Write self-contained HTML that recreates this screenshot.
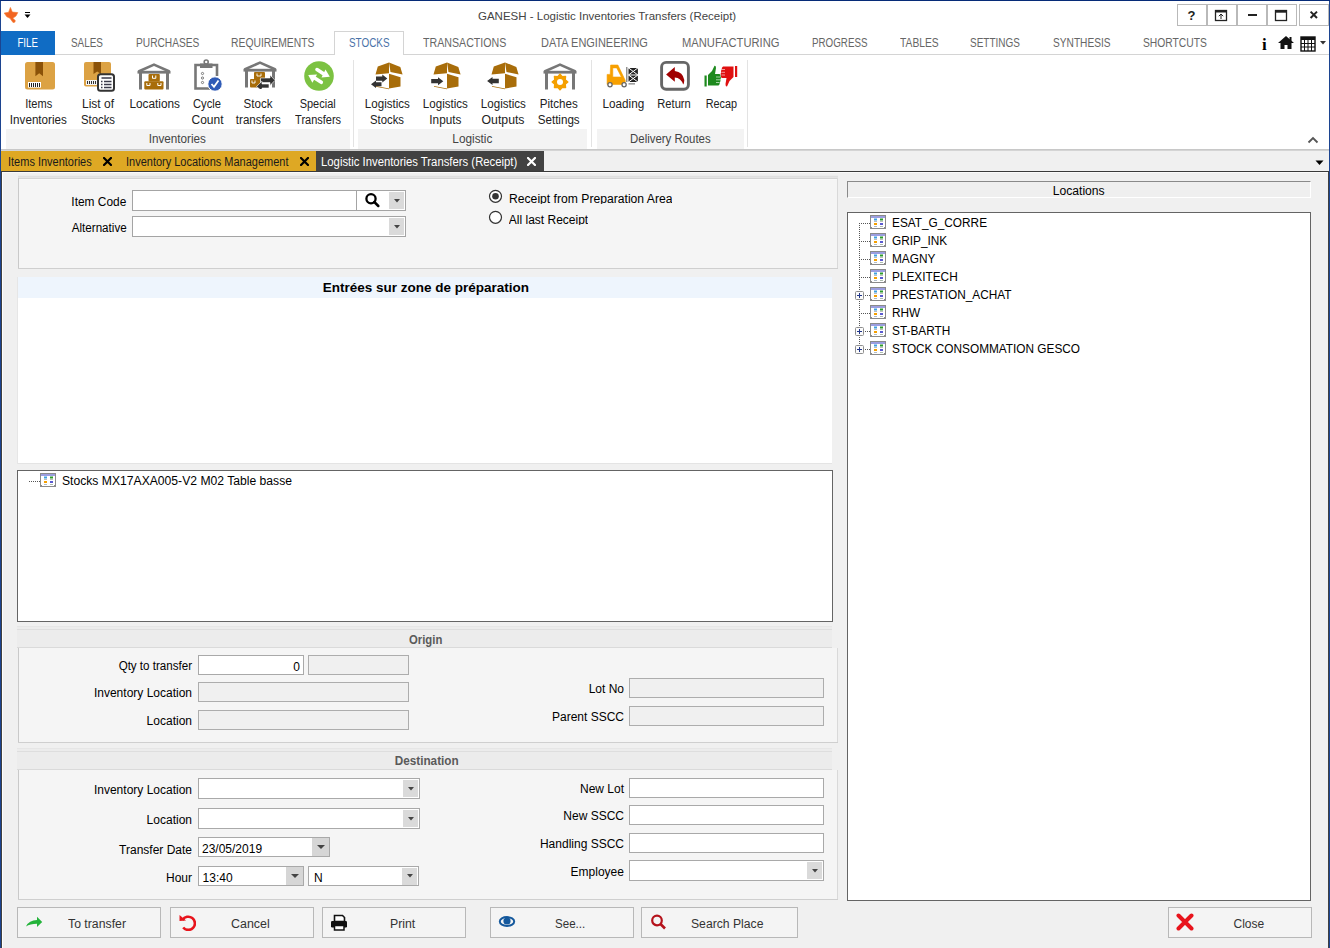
<!DOCTYPE html>
<html><head><meta charset="utf-8"><style>
html,body{margin:0;padding:0;}
body{width:1330px;height:948px;overflow:hidden;position:relative;background:#f0f0f0;font-family:'Liberation Sans', sans-serif;}
.a{position:absolute;}
.t{white-space:pre;}
</style></head><body>
<div class="a" style="left:0px;top:0px;width:1330px;height:150px;background:#ffffff;"></div>
<div class="a t" style="left:478.00px;top:11.07px;font-size:11.5px;line-height:11.5px;color:#444444;font-weight:normal;">GANESH - Logistic Inventories Transfers (Receipt)</div>
<div class="a" style="left:1177px;top:4px;width:30px;height:22px;background:#ffffff;border:1px solid #b9b9b9;box-sizing:border-box;"></div>
<div class="a" style="left:1207px;top:4px;width:30px;height:22px;background:#ffffff;border:1px solid #b9b9b9;box-sizing:border-box;"></div>
<div class="a" style="left:1237px;top:4px;width:30px;height:22px;background:#ffffff;border:1px solid #b9b9b9;box-sizing:border-box;"></div>
<div class="a" style="left:1267px;top:4px;width:30px;height:22px;background:#ffffff;border:1px solid #b9b9b9;box-sizing:border-box;"></div>
<div class="a" style="left:1299px;top:4px;width:30px;height:22px;background:#ffffff;border:1px solid #b9b9b9;box-sizing:border-box;"></div>
<div class="a" style="left:1px;top:31px;width:54px;height:24px;background:#106cc4;"></div>
<div class="a t" style="left:15.33px;top:36.84px;font-size:12px;line-height:12px;color:#ffffff;font-weight:normal;transform:scaleX(0.8089);transform-origin:center;">FILE</div>
<div class="a" style="left:55px;top:54px;width:1274px;height:1px;background:#d4d4d4;"></div>
<div class="a" style="left:334px;top:31px;width:70px;height:24px;background:#ffffff;border:1px solid #d4d4d4;border-bottom:none;box-sizing:border-box;"></div>
<div class="a t" style="left:71.00px;top:36.62px;font-size:12.5px;line-height:12.5px;color:#666666;font-weight:normal;transform:scaleX(0.7938);transform-origin:left;">SALES</div>
<div class="a t" style="left:135.60px;top:36.62px;font-size:12.5px;line-height:12.5px;color:#666666;font-weight:normal;transform:scaleX(0.8149);transform-origin:left;">PURCHASES</div>
<div class="a t" style="left:231.30px;top:36.62px;font-size:12.5px;line-height:12.5px;color:#666666;font-weight:normal;transform:scaleX(0.8282);transform-origin:left;">REQUIREMENTS</div>
<div class="a t" style="left:349.30px;top:36.62px;font-size:12.5px;line-height:12.5px;color:#4a72a8;font-weight:normal;transform:scaleX(0.7934);transform-origin:left;">STOCKS</div>
<div class="a t" style="left:422.60px;top:36.62px;font-size:12.5px;line-height:12.5px;color:#666666;font-weight:normal;transform:scaleX(0.8516);transform-origin:left;">TRANSACTIONS</div>
<div class="a t" style="left:541.10px;top:36.62px;font-size:12.5px;line-height:12.5px;color:#666666;font-weight:normal;transform:scaleX(0.8778);transform-origin:left;">DATA ENGINEERING</div>
<div class="a t" style="left:681.60px;top:36.62px;font-size:12.5px;line-height:12.5px;color:#666666;font-weight:normal;transform:scaleX(0.8933);transform-origin:left;">MANUFACTURING</div>
<div class="a t" style="left:812.40px;top:36.62px;font-size:12.5px;line-height:12.5px;color:#666666;font-weight:normal;transform:scaleX(0.7832);transform-origin:left;">PROGRESS</div>
<div class="a t" style="left:899.50px;top:36.62px;font-size:12.5px;line-height:12.5px;color:#666666;font-weight:normal;transform:scaleX(0.8231);transform-origin:left;">TABLES</div>
<div class="a t" style="left:970.10px;top:36.62px;font-size:12.5px;line-height:12.5px;color:#666666;font-weight:normal;transform:scaleX(0.7982);transform-origin:left;">SETTINGS</div>
<div class="a t" style="left:1053.30px;top:36.62px;font-size:12.5px;line-height:12.5px;color:#666666;font-weight:normal;transform:scaleX(0.8129);transform-origin:left;">SYNTHESIS</div>
<div class="a t" style="left:1143.10px;top:36.62px;font-size:12.5px;line-height:12.5px;color:#666666;font-weight:normal;transform:scaleX(0.8239);transform-origin:left;">SHORTCUTS</div>
<div class="a" style="left:6px;top:129px;width:344px;height:20px;background:#f3f3f3;"></div>
<div class="a" style="left:358px;top:129px;width:229px;height:20px;background:#f3f3f3;"></div>
<div class="a" style="left:597px;top:129px;width:147px;height:20px;background:#f3f3f3;"></div>
<div class="a" style="left:353px;top:60px;width:1px;height:87px;background:#e3e3e3;"></div>
<div class="a" style="left:591px;top:60px;width:1px;height:87px;background:#e3e3e3;"></div>
<div class="a" style="left:747px;top:60px;width:1px;height:87px;background:#e3e3e3;"></div>
<div class="a" style="left:0px;top:149px;width:1330px;height:1px;background:#c8c8c8;"></div>
<div class="a t" style="left:23.83px;top:98.44px;font-size:12px;line-height:12px;color:#222222;font-weight:normal;transform:scaleX(0.9201);transform-origin:center;">Items</div>
<div class="a t" style="left:9.15px;top:114.44px;font-size:12px;line-height:12px;color:#222222;font-weight:normal;transform:scaleX(0.9710);transform-origin:center;">Inventories</div>
<div class="a t" style="left:81.99px;top:98.44px;font-size:12px;line-height:12px;color:#222222;font-weight:normal;">List of</div>
<div class="a t" style="left:79.99px;top:114.44px;font-size:12px;line-height:12px;color:#222222;font-weight:normal;transform:scaleX(0.9440);transform-origin:center;">Stocks</div>
<div class="a t" style="left:129.01px;top:98.44px;font-size:12px;line-height:12px;color:#222222;font-weight:normal;transform:scaleX(0.9849);transform-origin:center;">Locations</div>
<div class="a t" style="left:192.49px;top:98.44px;font-size:12px;line-height:12px;color:#222222;font-weight:normal;transform:scaleX(0.9328);transform-origin:center;">Cycle</div>
<div class="a t" style="left:191.48px;top:114.44px;font-size:12px;line-height:12px;color:#222222;font-weight:normal;">Count</div>
<div class="a t" style="left:243.49px;top:98.44px;font-size:12px;line-height:12px;color:#222222;font-weight:normal;transform:scaleX(0.9662);transform-origin:center;">Stock</div>
<div class="a t" style="left:235.16px;top:114.44px;font-size:12px;line-height:12px;color:#222222;font-weight:normal;transform:scaleX(0.9639);transform-origin:center;">transfers</div>
<div class="a t" style="left:298.32px;top:98.44px;font-size:12px;line-height:12px;color:#222222;font-weight:normal;transform:scaleX(0.9146);transform-origin:center;">Special</div>
<div class="a t" style="left:292.88px;top:114.44px;font-size:12px;line-height:12px;color:#222222;font-weight:normal;transform:scaleX(0.9157);transform-origin:center;">Transfers</div>
<div class="a t" style="left:363.86px;top:98.44px;font-size:12px;line-height:12px;color:#222222;font-weight:normal;transform:scaleX(0.9639);transform-origin:center;">Logistics</div>
<div class="a t" style="left:369.19px;top:114.44px;font-size:12px;line-height:12px;color:#222222;font-weight:normal;transform:scaleX(0.9440);transform-origin:center;">Stocks</div>
<div class="a t" style="left:421.96px;top:98.44px;font-size:12px;line-height:12px;color:#222222;font-weight:normal;transform:scaleX(0.9639);transform-origin:center;">Logistics</div>
<div class="a t" style="left:428.95px;top:114.44px;font-size:12px;line-height:12px;color:#222222;font-weight:normal;transform:scaleX(0.9785);transform-origin:center;">Inputs</div>
<div class="a t" style="left:479.96px;top:98.44px;font-size:12px;line-height:12px;color:#222222;font-weight:normal;transform:scaleX(0.9639);transform-origin:center;">Logistics</div>
<div class="a t" style="left:482.28px;top:114.44px;font-size:12px;line-height:12px;color:#222222;font-weight:normal;transform:scaleX(1.0230);transform-origin:center;">Outputs</div>
<div class="a t" style="left:539.32px;top:98.44px;font-size:12px;line-height:12px;color:#222222;font-weight:normal;transform:scaleX(0.9655);transform-origin:center;">Pitches</div>
<div class="a t" style="left:537.32px;top:114.44px;font-size:12px;line-height:12px;color:#222222;font-weight:normal;transform:scaleX(0.9686);transform-origin:center;">Settings</div>
<div class="a t" style="left:602.24px;top:98.44px;font-size:12px;line-height:12px;color:#222222;font-weight:normal;transform:scaleX(0.9762);transform-origin:center;">Loading</div>
<div class="a t" style="left:656.48px;top:98.44px;font-size:12px;line-height:12px;color:#222222;font-weight:normal;transform:scaleX(0.9297);transform-origin:center;">Return</div>
<div class="a t" style="left:703.96px;top:98.44px;font-size:12px;line-height:12px;color:#222222;font-weight:normal;transform:scaleX(0.9023);transform-origin:center;">Recap</div>
<div class="a t" style="left:147.75px;top:133.14px;font-size:12px;line-height:12px;color:#444444;font-weight:normal;transform:scaleX(0.9744);transform-origin:center;">Inventories</div>
<div class="a t" style="left:451.96px;top:133.14px;font-size:12px;line-height:12px;color:#444444;font-weight:normal;transform:scaleX(0.9831);transform-origin:center;">Logistic</div>
<div class="a t" style="left:628.25px;top:133.14px;font-size:12px;line-height:12px;color:#444444;font-weight:normal;transform:scaleX(0.9504);transform-origin:center;">Delivery Routes</div>
<div class="a" style="left:0px;top:150px;width:1330px;height:21px;background:#f0f0f0;"></div>
<div class="a" style="left:0px;top:150px;width:1330px;height:1px;background:#d4d4d4;"></div>
<div class="a" style="left:1px;top:151px;width:315px;height:20px;background:#dea824;"></div>
<div class="a" style="left:316px;top:151px;width:228px;height:20px;background:#424242;"></div>
<div class="a" style="left:0px;top:171px;width:1330px;height:1px;background:#3a3a3a;"></div>
<div class="a t" style="left:8.30px;top:156.24px;font-size:12px;line-height:12px;color:#1a1a1a;font-weight:normal;transform:scaleX(0.9160);transform-origin:left;">Items Inventories</div>
<div class="a t" style="left:126.10px;top:156.24px;font-size:12px;line-height:12px;color:#1a1a1a;font-weight:normal;transform:scaleX(0.9157);transform-origin:left;">Inventory Locations Management</div>
<div class="a t" style="left:321.20px;top:156.24px;font-size:12px;line-height:12px;color:#ffffff;font-weight:normal;transform:scaleX(0.9433);transform-origin:left;">Logistic Inventories Transfers (Receipt)</div>
<div class="a" style="left:2px;top:172px;width:1326px;height:1px;background:#fbfbfb;"></div>
<div class="a" style="left:2px;top:172px;width:1px;height:777px;background:#ffffff;"></div>
<div class="a" style="left:1px;top:172px;width:1px;height:777px;background:#404040;"></div>
<div class="a" style="left:1328px;top:172px;width:1px;height:777px;background:#404040;"></div>
<div class="a" style="left:0px;top:0px;width:1px;height:949px;background:#1c4490;"></div>
<div class="a" style="left:1329px;top:0px;width:1px;height:949px;background:#1c4490;"></div>
<div class="a" style="left:0px;top:0px;width:1330px;height:1px;background:#062b78;"></div>
<div class="a" style="left:18px;top:176px;width:820px;height:93px;background:#f5f5f5;"></div>
<div class="a" style="left:18px;top:175px;width:820px;height:1px;background:#ececec;"></div>
<div class="a" style="left:18px;top:176px;width:820px;height:1px;background:#e0e0e0;"></div>
<div class="a" style="left:18px;top:177px;width:820px;height:1px;background:#e4e4e4;"></div>
<div class="a" style="left:18px;top:178px;width:820px;height:1px;background:#d4d4d4;"></div>
<div class="a" style="left:19px;top:179px;width:818px;height:1px;background:#f9f9f9;"></div>
<div class="a" style="left:18px;top:178px;width:1px;height:91px;background:#c9c9c9;"></div>
<div class="a" style="left:837px;top:178px;width:1px;height:91px;background:#d9d9d9;"></div>
<div class="a" style="left:18px;top:268px;width:820px;height:1px;background:#cfcfcf;"></div>
<div class="a t" style="left:71.14px;top:196.24px;font-size:12px;line-height:12px;color:#000;font-weight:normal;transform:scaleX(0.9935);transform-origin:right;">Item Code</div>
<div class="a t" style="left:69.80px;top:222.24px;font-size:12px;line-height:12px;color:#000;font-weight:normal;transform:scaleX(0.9700);transform-origin:right;">Alternative</div>
<div class="a" style="left:132px;top:190px;width:274px;height:21px;background:#ffffff;border:1px solid #a4a4a4;box-sizing:border-box;"></div>
<div class="a" style="left:356px;top:191px;width:1px;height:19px;background:#a4a4a4;"></div>
<div class="a" style="left:389px;top:192px;width:15px;height:17px;background:#dadada;"></div>
<div class="a" style="left:132px;top:216px;width:274px;height:21px;background:#ffffff;border:1px solid #a4a4a4;box-sizing:border-box;"></div>
<div class="a" style="left:389px;top:218px;width:15px;height:17px;background:#dadada;"></div>
<div class="a t" style="left:508.80px;top:193.14px;font-size:12px;line-height:12px;color:#000;font-weight:normal;transform:scaleX(1.0129);transform-origin:left;height:11px;overflow:hidden;">Receipt from Preparation Area</div>
<div class="a t" style="left:508.80px;top:214.34px;font-size:12px;line-height:12px;color:#000;font-weight:normal;height:11px;overflow:hidden;">All last Receipt</div>
<div class="a" style="left:17px;top:277px;width:815px;height:21px;background:#eef5fd;"></div>
<div class="a" style="left:17px;top:298px;width:815px;height:166px;background:#ffffff;"></div>
<div class="a" style="left:17px;top:463px;width:815px;height:1px;background:#e4e4e4;"></div>
<div class="a" style="left:17px;top:277px;width:1px;height:187px;background:#e6e6e6;"></div>
<div class="a t" style="left:322.74px;top:281.27px;font-size:13.5px;line-height:13.5px;color:#000;font-weight:bold;">Entrées sur zone de préparation</div>
<div class="a" style="left:17px;top:470px;width:816px;height:152px;background:#ffffff;border:1px solid #646464;box-sizing:border-box;"></div>
<div class="a t" style="left:61.70px;top:475.24px;font-size:12px;line-height:12px;color:#000;font-weight:normal;transform:scaleX(1.0121);transform-origin:left;">Stocks MX17AXA005-V2 M02 Table basse</div>
<div class="a" style="left:18px;top:648px;width:820px;height:95px;background:#f5f5f5;"></div>
<div class="a" style="left:17px;top:626px;width:815px;height:22px;background:#ececec;"></div>
<div class="a" style="left:17px;top:626px;width:815px;height:1px;background:#e6e6e6;"></div>
<div class="a" style="left:17px;top:629px;width:815px;height:1px;background:#dedede;"></div>
<div class="a" style="left:17px;top:647px;width:815px;height:1px;background:#dadada;"></div>
<div class="a" style="left:18px;top:648px;width:1px;height:95px;background:#c9c9c9;"></div>
<div class="a" style="left:837px;top:648px;width:1px;height:95px;background:#d9d9d9;"></div>
<div class="a" style="left:18px;top:742px;width:820px;height:1px;background:#cfcfcf;"></div>
<div class="a t" style="left:408.33px;top:633.54px;font-size:12px;line-height:12px;color:#5a5a5a;font-weight:bold;transform:scaleX(0.9422);transform-origin:center;">Origin</div>
<div class="a t" style="left:115.97px;top:659.84px;font-size:12px;line-height:12px;color:#000;font-weight:normal;transform:scaleX(0.9654);transform-origin:right;">Qty to transfer</div>
<div class="a t" style="left:93.94px;top:686.84px;font-size:12px;line-height:12px;color:#000;font-weight:normal;">Inventory Location</div>
<div class="a t" style="left:146.62px;top:714.84px;font-size:12px;line-height:12px;color:#000;font-weight:normal;">Location</div>
<div class="a" style="left:198px;top:655px;width:106px;height:20px;background:#ffffff;border:1px solid #a9a9a9;box-sizing:border-box;"></div>
<div class="a t" style="left:293.31px;top:660.64px;font-size:12px;line-height:12px;color:#000;font-weight:normal;">0</div>
<div class="a" style="left:308px;top:655px;width:101px;height:20px;background:#f0f0f0;border:1px solid #adadad;box-sizing:border-box;"></div>
<div class="a" style="left:198px;top:682px;width:211px;height:20px;background:#f0f0f0;border:1px solid #adadad;box-sizing:border-box;"></div>
<div class="a" style="left:198px;top:710px;width:211px;height:20px;background:#f0f0f0;border:1px solid #adadad;box-sizing:border-box;"></div>
<div class="a t" style="left:588.64px;top:682.64px;font-size:12px;line-height:12px;color:#000;font-weight:normal;">Lot No</div>
<div class="a t" style="left:551.97px;top:710.64px;font-size:12px;line-height:12px;color:#000;font-weight:normal;">Parent SSCC</div>
<div class="a" style="left:629px;top:678px;width:195px;height:20px;background:#f0f0f0;border:1px solid #adadad;box-sizing:border-box;"></div>
<div class="a" style="left:629px;top:706px;width:195px;height:20px;background:#f0f0f0;border:1px solid #adadad;box-sizing:border-box;"></div>
<div class="a" style="left:18px;top:770px;width:820px;height:130px;background:#f5f5f5;"></div>
<div class="a" style="left:17px;top:748px;width:815px;height:22px;background:#ececec;"></div>
<div class="a" style="left:17px;top:748px;width:815px;height:1px;background:#e6e6e6;"></div>
<div class="a" style="left:17px;top:751px;width:815px;height:1px;background:#dedede;"></div>
<div class="a" style="left:17px;top:769px;width:815px;height:1px;background:#dadada;"></div>
<div class="a" style="left:18px;top:770px;width:1px;height:130px;background:#c9c9c9;"></div>
<div class="a" style="left:837px;top:770px;width:1px;height:130px;background:#d9d9d9;"></div>
<div class="a" style="left:18px;top:899px;width:820px;height:1px;background:#cfcfcf;"></div>
<div class="a t" style="left:394.03px;top:755.34px;font-size:12px;line-height:12px;color:#5a5a5a;font-weight:bold;transform:scaleX(0.9794);transform-origin:center;">Destination</div>
<div class="a t" style="left:93.94px;top:783.84px;font-size:12px;line-height:12px;color:#000;font-weight:normal;">Inventory Location</div>
<div class="a t" style="left:146.62px;top:813.84px;font-size:12px;line-height:12px;color:#000;font-weight:normal;">Location</div>
<div class="a t" style="left:119.08px;top:843.64px;font-size:12px;line-height:12px;color:#000;font-weight:normal;">Transfer Date</div>
<div class="a t" style="left:165.98px;top:872.14px;font-size:12px;line-height:12px;color:#000;font-weight:normal;">Hour</div>
<div class="a" style="left:198px;top:778px;width:222px;height:21px;background:#ffffff;border:1px solid #a9a9a9;box-sizing:border-box;"></div>
<div class="a" style="left:403px;top:780px;width:15px;height:17px;background:#dadada;"></div>
<div class="a" style="left:198px;top:808px;width:222px;height:21px;background:#ffffff;border:1px solid #a9a9a9;box-sizing:border-box;"></div>
<div class="a" style="left:403px;top:810px;width:15px;height:17px;background:#dadada;"></div>
<div class="a" style="left:198px;top:837px;width:132px;height:20px;background:#ffffff;border:1px solid #a9a9a9;box-sizing:border-box;"></div>
<div class="a" style="left:312px;top:838px;width:17px;height:18px;background:#d6d6d6;"></div>
<div class="a t" style="left:202.00px;top:843.34px;font-size:12px;line-height:12px;color:#000;font-weight:normal;">23/05/2019</div>
<div class="a" style="left:198px;top:866px;width:106px;height:20px;background:#ffffff;border:1px solid #a9a9a9;box-sizing:border-box;"></div>
<div class="a" style="left:286px;top:867px;width:17px;height:18px;background:#d6d6d6;"></div>
<div class="a t" style="left:202.60px;top:872.44px;font-size:12px;line-height:12px;color:#000;font-weight:normal;">13:40</div>
<div class="a" style="left:308px;top:866px;width:111px;height:20px;background:#ffffff;border:1px solid #a9a9a9;box-sizing:border-box;"></div>
<div class="a" style="left:402px;top:868px;width:15px;height:17px;background:#dadada;"></div>
<div class="a t" style="left:314.00px;top:871.64px;font-size:12px;line-height:12px;color:#000;font-weight:normal;">N</div>
<div class="a t" style="left:579.97px;top:783.04px;font-size:12px;line-height:12px;color:#000;font-weight:normal;">New Lot</div>
<div class="a t" style="left:563.31px;top:809.84px;font-size:12px;line-height:12px;color:#000;font-weight:normal;">New SSCC</div>
<div class="a t" style="left:539.95px;top:837.84px;font-size:12px;line-height:12px;color:#000;font-weight:normal;">Handling SSCC</div>
<div class="a t" style="left:570.62px;top:865.84px;font-size:12px;line-height:12px;color:#000;font-weight:normal;">Employee</div>
<div class="a" style="left:629px;top:778px;width:195px;height:20px;background:#ffffff;border:1px solid #a9a9a9;box-sizing:border-box;"></div>
<div class="a" style="left:629px;top:805px;width:195px;height:20px;background:#ffffff;border:1px solid #a9a9a9;box-sizing:border-box;"></div>
<div class="a" style="left:629px;top:833px;width:195px;height:20px;background:#ffffff;border:1px solid #a9a9a9;box-sizing:border-box;"></div>
<div class="a" style="left:629px;top:860px;width:195px;height:21px;background:#ffffff;border:1px solid #a9a9a9;box-sizing:border-box;"></div>
<div class="a" style="left:807px;top:862px;width:15px;height:17px;background:#dadada;"></div>
<div class="a" style="left:847px;top:181px;width:464px;height:17px;background:#efefef;border-top:1px solid #8a8a8a;border-left:1px solid #8a8a8a;border-bottom:1px solid #ffffff;border-right:1px solid #ffffff;box-sizing:border-box;"></div>
<div class="a t" style="left:1053.01px;top:184.74px;font-size:12px;line-height:12px;color:#000;font-weight:normal;transform:scaleX(1.0122);transform-origin:center;">Locations</div>
<div class="a" style="left:847px;top:212px;width:464px;height:689px;background:#ffffff;border:1px solid #646464;box-sizing:border-box;"></div>
<div class="a t" style="left:892.00px;top:216.74px;font-size:12px;line-height:12px;color:#000;font-weight:normal;transform:scaleX(0.9850);transform-origin:left;">ESAT_G_CORRE</div>
<div class="a t" style="left:892.00px;top:234.74px;font-size:12px;line-height:12px;color:#000;font-weight:normal;transform:scaleX(0.9850);transform-origin:left;">GRIP_INK</div>
<div class="a t" style="left:892.00px;top:252.74px;font-size:12px;line-height:12px;color:#000;font-weight:normal;transform:scaleX(0.9850);transform-origin:left;">MAGNY</div>
<div class="a t" style="left:892.00px;top:270.74px;font-size:12px;line-height:12px;color:#000;font-weight:normal;transform:scaleX(0.9850);transform-origin:left;">PLEXITECH</div>
<div class="a t" style="left:892.00px;top:288.74px;font-size:12px;line-height:12px;color:#000;font-weight:normal;transform:scaleX(0.9850);transform-origin:left;">PRESTATION_ACHAT</div>
<div class="a t" style="left:892.00px;top:306.74px;font-size:12px;line-height:12px;color:#000;font-weight:normal;transform:scaleX(0.9850);transform-origin:left;">RHW</div>
<div class="a t" style="left:892.00px;top:324.74px;font-size:12px;line-height:12px;color:#000;font-weight:normal;transform:scaleX(0.9850);transform-origin:left;">ST-BARTH</div>
<div class="a t" style="left:892.00px;top:342.74px;font-size:12px;line-height:12px;color:#000;font-weight:normal;transform:scaleX(0.9850);transform-origin:left;">STOCK CONSOMMATION GESCO</div>
<div class="a" style="left:17px;top:907px;width:144px;height:31px;background:#f4f4f4;border:1px solid #b8b8b8;box-sizing:border-box;"></div>
<div class="a t" style="left:67.80px;top:918.34px;font-size:12px;line-height:12px;color:#333333;font-weight:normal;transform:scaleX(1.0229);transform-origin:left;">To transfer</div>
<div class="a" style="left:170px;top:907px;width:144px;height:31px;background:#f4f4f4;border:1px solid #b8b8b8;box-sizing:border-box;"></div>
<div class="a t" style="left:231.00px;top:918.34px;font-size:12px;line-height:12px;color:#333333;font-weight:normal;transform:scaleX(1.0359);transform-origin:left;">Cancel</div>
<div class="a" style="left:322px;top:907px;width:144px;height:31px;background:#f4f4f4;border:1px solid #b8b8b8;box-sizing:border-box;"></div>
<div class="a t" style="left:390.00px;top:918.34px;font-size:12px;line-height:12px;color:#333333;font-weight:normal;transform:scaleX(1.0248);transform-origin:left;">Print</div>
<div class="a" style="left:490px;top:907px;width:144px;height:31px;background:#f4f4f4;border:1px solid #b8b8b8;box-sizing:border-box;"></div>
<div class="a t" style="left:554.50px;top:918.34px;font-size:12px;line-height:12px;color:#333333;font-weight:normal;transform:scaleX(0.9630);transform-origin:left;">See...</div>
<div class="a" style="left:641px;top:907px;width:157px;height:31px;background:#f4f4f4;border:1px solid #b8b8b8;box-sizing:border-box;"></div>
<div class="a t" style="left:691.00px;top:918.34px;font-size:12px;line-height:12px;color:#333333;font-weight:normal;transform:scaleX(1.0144);transform-origin:left;">Search Place</div>
<div class="a" style="left:1168px;top:907px;width:144px;height:31px;background:#f4f4f4;border:1px solid #b8b8b8;box-sizing:border-box;"></div>
<div class="a t" style="left:1233.50px;top:918.34px;font-size:12px;line-height:12px;color:#333333;font-weight:normal;">Close</div>
<svg class="a" style="left:392.5px;top:197.55px;" width="8" height="5.5" viewBox="0 0 8 5.5"><polygon points="1,1 7,1 4.0,4.5" fill="#444"/></svg>
<svg class="a" style="left:392.5px;top:223.55px;" width="8" height="5.5" viewBox="0 0 8 5.5"><polygon points="1,1 7,1 4.0,4.5" fill="#444"/></svg>
<svg class="a" style="left:406.6px;top:785.75px;" width="8" height="5.5" viewBox="0 0 8 5.5"><polygon points="1,1 7,1 4.0,4.5" fill="#444"/></svg>
<svg class="a" style="left:406.6px;top:815.75px;" width="8" height="5.5" viewBox="0 0 8 5.5"><polygon points="1,1 7,1 4.0,4.5" fill="#444"/></svg>
<svg class="a" style="left:315.6px;top:844.2px;" width="10" height="6" viewBox="0 0 10 6"><polygon points="1,1 9,1 5.0,5" fill="#444"/></svg>
<svg class="a" style="left:289.6px;top:872.7px;" width="10" height="6" viewBox="0 0 10 6"><polygon points="1,1 9,1 5.0,5" fill="#444"/></svg>
<svg class="a" style="left:405.6px;top:873.45px;" width="8" height="5.5" viewBox="0 0 8 5.5"><polygon points="1,1 7,1 4.0,4.5" fill="#444"/></svg>
<svg class="a" style="left:810.5px;top:867.75px;" width="8" height="5.5" viewBox="0 0 8 5.5"><polygon points="1,1 7,1 4.0,4.5" fill="#444"/></svg>
<svg class="a" style="left:363px;top:191px;" width="18" height="18" viewBox="0 0 18 18"><circle cx="8" cy="7.7" r="4.6" fill="none" stroke="#000" stroke-width="2.3"/><line x1="11.3" y1="11" x2="15.3" y2="15" stroke="#000" stroke-width="2.5" stroke-linecap="round"/></svg>
<svg class="a" style="left:488px;top:189px;" width="15" height="15" viewBox="0 0 15 15"><circle cx="7.5" cy="7.3" r="6" fill="#fff" stroke="#333" stroke-width="1.2"/><circle cx="7.5" cy="7.3" r="3.3" fill="#333"/></svg>
<svg class="a" style="left:488px;top:210px;" width="15" height="15" viewBox="0 0 15 15"><circle cx="7.5" cy="7.3" r="6" fill="#fff" stroke="#333" stroke-width="1.2"/></svg>
<div class="a" style="left:859px;top:223px;width:1px;height:1px;background:#555;"></div>
<div class="a" style="left:859px;top:225px;width:1px;height:1px;background:#555;"></div>
<div class="a" style="left:859px;top:227px;width:1px;height:1px;background:#555;"></div>
<div class="a" style="left:859px;top:229px;width:1px;height:1px;background:#555;"></div>
<div class="a" style="left:859px;top:231px;width:1px;height:1px;background:#555;"></div>
<div class="a" style="left:859px;top:233px;width:1px;height:1px;background:#555;"></div>
<div class="a" style="left:859px;top:235px;width:1px;height:1px;background:#555;"></div>
<div class="a" style="left:859px;top:237px;width:1px;height:1px;background:#555;"></div>
<div class="a" style="left:859px;top:239px;width:1px;height:1px;background:#555;"></div>
<div class="a" style="left:859px;top:241px;width:1px;height:1px;background:#555;"></div>
<div class="a" style="left:859px;top:243px;width:1px;height:1px;background:#555;"></div>
<div class="a" style="left:859px;top:245px;width:1px;height:1px;background:#555;"></div>
<div class="a" style="left:859px;top:247px;width:1px;height:1px;background:#555;"></div>
<div class="a" style="left:859px;top:249px;width:1px;height:1px;background:#555;"></div>
<div class="a" style="left:859px;top:251px;width:1px;height:1px;background:#555;"></div>
<div class="a" style="left:859px;top:253px;width:1px;height:1px;background:#555;"></div>
<div class="a" style="left:859px;top:255px;width:1px;height:1px;background:#555;"></div>
<div class="a" style="left:859px;top:257px;width:1px;height:1px;background:#555;"></div>
<div class="a" style="left:859px;top:259px;width:1px;height:1px;background:#555;"></div>
<div class="a" style="left:859px;top:261px;width:1px;height:1px;background:#555;"></div>
<div class="a" style="left:859px;top:263px;width:1px;height:1px;background:#555;"></div>
<div class="a" style="left:859px;top:265px;width:1px;height:1px;background:#555;"></div>
<div class="a" style="left:859px;top:267px;width:1px;height:1px;background:#555;"></div>
<div class="a" style="left:859px;top:269px;width:1px;height:1px;background:#555;"></div>
<div class="a" style="left:859px;top:271px;width:1px;height:1px;background:#555;"></div>
<div class="a" style="left:859px;top:273px;width:1px;height:1px;background:#555;"></div>
<div class="a" style="left:859px;top:275px;width:1px;height:1px;background:#555;"></div>
<div class="a" style="left:859px;top:277px;width:1px;height:1px;background:#555;"></div>
<div class="a" style="left:859px;top:279px;width:1px;height:1px;background:#555;"></div>
<div class="a" style="left:859px;top:281px;width:1px;height:1px;background:#555;"></div>
<div class="a" style="left:859px;top:283px;width:1px;height:1px;background:#555;"></div>
<div class="a" style="left:859px;top:285px;width:1px;height:1px;background:#555;"></div>
<div class="a" style="left:859px;top:287px;width:1px;height:1px;background:#555;"></div>
<div class="a" style="left:859px;top:289px;width:1px;height:1px;background:#555;"></div>
<div class="a" style="left:859px;top:291px;width:1px;height:1px;background:#555;"></div>
<div class="a" style="left:859px;top:293px;width:1px;height:1px;background:#555;"></div>
<div class="a" style="left:859px;top:295px;width:1px;height:1px;background:#555;"></div>
<div class="a" style="left:859px;top:297px;width:1px;height:1px;background:#555;"></div>
<div class="a" style="left:859px;top:299px;width:1px;height:1px;background:#555;"></div>
<div class="a" style="left:859px;top:301px;width:1px;height:1px;background:#555;"></div>
<div class="a" style="left:859px;top:303px;width:1px;height:1px;background:#555;"></div>
<div class="a" style="left:859px;top:305px;width:1px;height:1px;background:#555;"></div>
<div class="a" style="left:859px;top:307px;width:1px;height:1px;background:#555;"></div>
<div class="a" style="left:859px;top:309px;width:1px;height:1px;background:#555;"></div>
<div class="a" style="left:859px;top:311px;width:1px;height:1px;background:#555;"></div>
<div class="a" style="left:859px;top:313px;width:1px;height:1px;background:#555;"></div>
<div class="a" style="left:859px;top:315px;width:1px;height:1px;background:#555;"></div>
<div class="a" style="left:859px;top:317px;width:1px;height:1px;background:#555;"></div>
<div class="a" style="left:859px;top:319px;width:1px;height:1px;background:#555;"></div>
<div class="a" style="left:859px;top:321px;width:1px;height:1px;background:#555;"></div>
<div class="a" style="left:859px;top:323px;width:1px;height:1px;background:#555;"></div>
<div class="a" style="left:859px;top:325px;width:1px;height:1px;background:#555;"></div>
<div class="a" style="left:859px;top:327px;width:1px;height:1px;background:#555;"></div>
<div class="a" style="left:859px;top:329px;width:1px;height:1px;background:#555;"></div>
<div class="a" style="left:859px;top:331px;width:1px;height:1px;background:#555;"></div>
<div class="a" style="left:859px;top:333px;width:1px;height:1px;background:#555;"></div>
<div class="a" style="left:859px;top:335px;width:1px;height:1px;background:#555;"></div>
<div class="a" style="left:859px;top:337px;width:1px;height:1px;background:#555;"></div>
<div class="a" style="left:859px;top:339px;width:1px;height:1px;background:#555;"></div>
<div class="a" style="left:859px;top:341px;width:1px;height:1px;background:#555;"></div>
<div class="a" style="left:859px;top:343px;width:1px;height:1px;background:#555;"></div>
<div class="a" style="left:859px;top:345px;width:1px;height:1px;background:#555;"></div>
<div class="a" style="left:859px;top:347px;width:1px;height:1px;background:#555;"></div>
<div class="a" style="left:859px;top:349px;width:1px;height:1px;background:#555;"></div>
<div class="a" style="left:861px;top:223px;width:1px;height:1px;background:#555;"></div>
<div class="a" style="left:863px;top:223px;width:1px;height:1px;background:#555;"></div>
<div class="a" style="left:865px;top:223px;width:1px;height:1px;background:#555;"></div>
<div class="a" style="left:867px;top:223px;width:1px;height:1px;background:#555;"></div>
<div class="a" style="left:869px;top:223px;width:1px;height:1px;background:#555;"></div>
<svg class="a" style="left:870px;top:215px;" width="16" height="14" viewBox="0 0 16 14"><rect x="0.5" y="0.5" width="15" height="13" fill="#fff" stroke="#8a8a8a"/><rect x="1" y="1" width="14" height="2" fill="#9c9ee0"/><rect x="4" y="3.5" width="3" height="2" fill="#3fa0e0"/><rect x="10" y="3.5" width="3" height="2" fill="#2c9a2c"/><rect x="4" y="6" width="3" height="0.8" fill="#aaa"/><rect x="10" y="6" width="3" height="0.8" fill="#aaa"/><rect x="4" y="8" width="3" height="2" fill="#f5a000"/><rect x="10" y="8" width="3" height="2" fill="#5a5ad0"/><rect x="4" y="11" width="3" height="0.8" fill="#99aabb"/><rect x="10" y="11" width="3" height="0.8" fill="#99aa99"/><rect x="0" y="12" width="2" height="2" fill="#8a8a8a"/><rect x="14" y="12" width="2" height="2" fill="#8a8a8a"/></svg>
<div class="a" style="left:861px;top:241px;width:1px;height:1px;background:#555;"></div>
<div class="a" style="left:863px;top:241px;width:1px;height:1px;background:#555;"></div>
<div class="a" style="left:865px;top:241px;width:1px;height:1px;background:#555;"></div>
<div class="a" style="left:867px;top:241px;width:1px;height:1px;background:#555;"></div>
<div class="a" style="left:869px;top:241px;width:1px;height:1px;background:#555;"></div>
<svg class="a" style="left:870px;top:233px;" width="16" height="14" viewBox="0 0 16 14"><rect x="0.5" y="0.5" width="15" height="13" fill="#fff" stroke="#8a8a8a"/><rect x="1" y="1" width="14" height="2" fill="#9c9ee0"/><rect x="4" y="3.5" width="3" height="2" fill="#3fa0e0"/><rect x="10" y="3.5" width="3" height="2" fill="#2c9a2c"/><rect x="4" y="6" width="3" height="0.8" fill="#aaa"/><rect x="10" y="6" width="3" height="0.8" fill="#aaa"/><rect x="4" y="8" width="3" height="2" fill="#f5a000"/><rect x="10" y="8" width="3" height="2" fill="#5a5ad0"/><rect x="4" y="11" width="3" height="0.8" fill="#99aabb"/><rect x="10" y="11" width="3" height="0.8" fill="#99aa99"/><rect x="0" y="12" width="2" height="2" fill="#8a8a8a"/><rect x="14" y="12" width="2" height="2" fill="#8a8a8a"/></svg>
<div class="a" style="left:861px;top:259px;width:1px;height:1px;background:#555;"></div>
<div class="a" style="left:863px;top:259px;width:1px;height:1px;background:#555;"></div>
<div class="a" style="left:865px;top:259px;width:1px;height:1px;background:#555;"></div>
<div class="a" style="left:867px;top:259px;width:1px;height:1px;background:#555;"></div>
<div class="a" style="left:869px;top:259px;width:1px;height:1px;background:#555;"></div>
<svg class="a" style="left:870px;top:251px;" width="16" height="14" viewBox="0 0 16 14"><rect x="0.5" y="0.5" width="15" height="13" fill="#fff" stroke="#8a8a8a"/><rect x="1" y="1" width="14" height="2" fill="#9c9ee0"/><rect x="4" y="3.5" width="3" height="2" fill="#3fa0e0"/><rect x="10" y="3.5" width="3" height="2" fill="#2c9a2c"/><rect x="4" y="6" width="3" height="0.8" fill="#aaa"/><rect x="10" y="6" width="3" height="0.8" fill="#aaa"/><rect x="4" y="8" width="3" height="2" fill="#f5a000"/><rect x="10" y="8" width="3" height="2" fill="#5a5ad0"/><rect x="4" y="11" width="3" height="0.8" fill="#99aabb"/><rect x="10" y="11" width="3" height="0.8" fill="#99aa99"/><rect x="0" y="12" width="2" height="2" fill="#8a8a8a"/><rect x="14" y="12" width="2" height="2" fill="#8a8a8a"/></svg>
<div class="a" style="left:861px;top:277px;width:1px;height:1px;background:#555;"></div>
<div class="a" style="left:863px;top:277px;width:1px;height:1px;background:#555;"></div>
<div class="a" style="left:865px;top:277px;width:1px;height:1px;background:#555;"></div>
<div class="a" style="left:867px;top:277px;width:1px;height:1px;background:#555;"></div>
<div class="a" style="left:869px;top:277px;width:1px;height:1px;background:#555;"></div>
<svg class="a" style="left:870px;top:269px;" width="16" height="14" viewBox="0 0 16 14"><rect x="0.5" y="0.5" width="15" height="13" fill="#fff" stroke="#8a8a8a"/><rect x="1" y="1" width="14" height="2" fill="#9c9ee0"/><rect x="4" y="3.5" width="3" height="2" fill="#3fa0e0"/><rect x="10" y="3.5" width="3" height="2" fill="#2c9a2c"/><rect x="4" y="6" width="3" height="0.8" fill="#aaa"/><rect x="10" y="6" width="3" height="0.8" fill="#aaa"/><rect x="4" y="8" width="3" height="2" fill="#f5a000"/><rect x="10" y="8" width="3" height="2" fill="#5a5ad0"/><rect x="4" y="11" width="3" height="0.8" fill="#99aabb"/><rect x="10" y="11" width="3" height="0.8" fill="#99aa99"/><rect x="0" y="12" width="2" height="2" fill="#8a8a8a"/><rect x="14" y="12" width="2" height="2" fill="#8a8a8a"/></svg>
<div class="a" style="left:861px;top:295px;width:1px;height:1px;background:#555;"></div>
<div class="a" style="left:863px;top:295px;width:1px;height:1px;background:#555;"></div>
<div class="a" style="left:865px;top:295px;width:1px;height:1px;background:#555;"></div>
<div class="a" style="left:867px;top:295px;width:1px;height:1px;background:#555;"></div>
<div class="a" style="left:869px;top:295px;width:1px;height:1px;background:#555;"></div>
<svg class="a" style="left:870px;top:287px;" width="16" height="14" viewBox="0 0 16 14"><rect x="0.5" y="0.5" width="15" height="13" fill="#fff" stroke="#8a8a8a"/><rect x="1" y="1" width="14" height="2" fill="#9c9ee0"/><rect x="4" y="3.5" width="3" height="2" fill="#3fa0e0"/><rect x="10" y="3.5" width="3" height="2" fill="#2c9a2c"/><rect x="4" y="6" width="3" height="0.8" fill="#aaa"/><rect x="10" y="6" width="3" height="0.8" fill="#aaa"/><rect x="4" y="8" width="3" height="2" fill="#f5a000"/><rect x="10" y="8" width="3" height="2" fill="#5a5ad0"/><rect x="4" y="11" width="3" height="0.8" fill="#99aabb"/><rect x="10" y="11" width="3" height="0.8" fill="#99aa99"/><rect x="0" y="12" width="2" height="2" fill="#8a8a8a"/><rect x="14" y="12" width="2" height="2" fill="#8a8a8a"/></svg>
<div class="a" style="left:861px;top:313px;width:1px;height:1px;background:#555;"></div>
<div class="a" style="left:863px;top:313px;width:1px;height:1px;background:#555;"></div>
<div class="a" style="left:865px;top:313px;width:1px;height:1px;background:#555;"></div>
<div class="a" style="left:867px;top:313px;width:1px;height:1px;background:#555;"></div>
<div class="a" style="left:869px;top:313px;width:1px;height:1px;background:#555;"></div>
<svg class="a" style="left:870px;top:305px;" width="16" height="14" viewBox="0 0 16 14"><rect x="0.5" y="0.5" width="15" height="13" fill="#fff" stroke="#8a8a8a"/><rect x="1" y="1" width="14" height="2" fill="#9c9ee0"/><rect x="4" y="3.5" width="3" height="2" fill="#3fa0e0"/><rect x="10" y="3.5" width="3" height="2" fill="#2c9a2c"/><rect x="4" y="6" width="3" height="0.8" fill="#aaa"/><rect x="10" y="6" width="3" height="0.8" fill="#aaa"/><rect x="4" y="8" width="3" height="2" fill="#f5a000"/><rect x="10" y="8" width="3" height="2" fill="#5a5ad0"/><rect x="4" y="11" width="3" height="0.8" fill="#99aabb"/><rect x="10" y="11" width="3" height="0.8" fill="#99aa99"/><rect x="0" y="12" width="2" height="2" fill="#8a8a8a"/><rect x="14" y="12" width="2" height="2" fill="#8a8a8a"/></svg>
<div class="a" style="left:861px;top:331px;width:1px;height:1px;background:#555;"></div>
<div class="a" style="left:863px;top:331px;width:1px;height:1px;background:#555;"></div>
<div class="a" style="left:865px;top:331px;width:1px;height:1px;background:#555;"></div>
<div class="a" style="left:867px;top:331px;width:1px;height:1px;background:#555;"></div>
<div class="a" style="left:869px;top:331px;width:1px;height:1px;background:#555;"></div>
<svg class="a" style="left:870px;top:323px;" width="16" height="14" viewBox="0 0 16 14"><rect x="0.5" y="0.5" width="15" height="13" fill="#fff" stroke="#8a8a8a"/><rect x="1" y="1" width="14" height="2" fill="#9c9ee0"/><rect x="4" y="3.5" width="3" height="2" fill="#3fa0e0"/><rect x="10" y="3.5" width="3" height="2" fill="#2c9a2c"/><rect x="4" y="6" width="3" height="0.8" fill="#aaa"/><rect x="10" y="6" width="3" height="0.8" fill="#aaa"/><rect x="4" y="8" width="3" height="2" fill="#f5a000"/><rect x="10" y="8" width="3" height="2" fill="#5a5ad0"/><rect x="4" y="11" width="3" height="0.8" fill="#99aabb"/><rect x="10" y="11" width="3" height="0.8" fill="#99aa99"/><rect x="0" y="12" width="2" height="2" fill="#8a8a8a"/><rect x="14" y="12" width="2" height="2" fill="#8a8a8a"/></svg>
<div class="a" style="left:861px;top:349px;width:1px;height:1px;background:#555;"></div>
<div class="a" style="left:863px;top:349px;width:1px;height:1px;background:#555;"></div>
<div class="a" style="left:865px;top:349px;width:1px;height:1px;background:#555;"></div>
<div class="a" style="left:867px;top:349px;width:1px;height:1px;background:#555;"></div>
<div class="a" style="left:869px;top:349px;width:1px;height:1px;background:#555;"></div>
<svg class="a" style="left:870px;top:341px;" width="16" height="14" viewBox="0 0 16 14"><rect x="0.5" y="0.5" width="15" height="13" fill="#fff" stroke="#8a8a8a"/><rect x="1" y="1" width="14" height="2" fill="#9c9ee0"/><rect x="4" y="3.5" width="3" height="2" fill="#3fa0e0"/><rect x="10" y="3.5" width="3" height="2" fill="#2c9a2c"/><rect x="4" y="6" width="3" height="0.8" fill="#aaa"/><rect x="10" y="6" width="3" height="0.8" fill="#aaa"/><rect x="4" y="8" width="3" height="2" fill="#f5a000"/><rect x="10" y="8" width="3" height="2" fill="#5a5ad0"/><rect x="4" y="11" width="3" height="0.8" fill="#99aabb"/><rect x="10" y="11" width="3" height="0.8" fill="#99aa99"/><rect x="0" y="12" width="2" height="2" fill="#8a8a8a"/><rect x="14" y="12" width="2" height="2" fill="#8a8a8a"/></svg>
<svg class="a" style="left:855px;top:291px;" width="9" height="9" viewBox="0 0 9 9"><rect x="0.5" y="0.5" width="8" height="8" rx="1" fill="#fbfbfb" stroke="#8e8e8e"/><rect x="2" y="4" width="5" height="1" fill="#20358a"/><rect x="4" y="2" width="1" height="5" fill="#20358a"/></svg>
<svg class="a" style="left:855px;top:327px;" width="9" height="9" viewBox="0 0 9 9"><rect x="0.5" y="0.5" width="8" height="8" rx="1" fill="#fbfbfb" stroke="#8e8e8e"/><rect x="2" y="4" width="5" height="1" fill="#20358a"/><rect x="4" y="2" width="1" height="5" fill="#20358a"/></svg>
<svg class="a" style="left:855px;top:345px;" width="9" height="9" viewBox="0 0 9 9"><rect x="0.5" y="0.5" width="8" height="8" rx="1" fill="#fbfbfb" stroke="#8e8e8e"/><rect x="2" y="4" width="5" height="1" fill="#20358a"/><rect x="4" y="2" width="1" height="5" fill="#20358a"/></svg>
<div class="a" style="left:29px;top:481px;width:1px;height:1px;background:#555;"></div>
<div class="a" style="left:31px;top:481px;width:1px;height:1px;background:#555;"></div>
<div class="a" style="left:33px;top:481px;width:1px;height:1px;background:#555;"></div>
<div class="a" style="left:35px;top:481px;width:1px;height:1px;background:#555;"></div>
<div class="a" style="left:37px;top:481px;width:1px;height:1px;background:#555;"></div>
<div class="a" style="left:39px;top:481px;width:1px;height:1px;background:#555;"></div>
<svg class="a" style="left:40px;top:473px;" width="16" height="14" viewBox="0 0 16 14"><rect x="0.5" y="0.5" width="15" height="13" fill="#fff" stroke="#8a8a8a"/><rect x="1" y="1" width="14" height="2" fill="#9c9ee0"/><rect x="4" y="3.5" width="3" height="2" fill="#3fa0e0"/><rect x="10" y="3.5" width="3" height="2" fill="#2c9a2c"/><rect x="4" y="6" width="3" height="0.8" fill="#aaa"/><rect x="10" y="6" width="3" height="0.8" fill="#aaa"/><rect x="4" y="8" width="3" height="2" fill="#f5a000"/><rect x="10" y="8" width="3" height="2" fill="#5a5ad0"/><rect x="4" y="11" width="3" height="0.8" fill="#99aabb"/><rect x="10" y="11" width="3" height="0.8" fill="#99aa99"/><rect x="0" y="12" width="2" height="2" fill="#8a8a8a"/><rect x="14" y="12" width="2" height="2" fill="#8a8a8a"/></svg>
<svg class="a" style="left:103.0px;top:156.8px;" width="9" height="9" viewBox="0 0 9 9"><path d="M1,1 L8,8 M8,1 L1,8" stroke="#000" stroke-width="2.2" stroke-linecap="square"/></svg>
<svg class="a" style="left:299.8px;top:156.8px;" width="9" height="9" viewBox="0 0 9 9"><path d="M1,1 L8,8 M8,1 L1,8" stroke="#000" stroke-width="2.2" stroke-linecap="square"/></svg>
<svg class="a" style="left:527.0px;top:156.8px;" width="9" height="9" viewBox="0 0 9 9"><path d="M1,1 L8,8 M8,1 L1,8" stroke="#fff" stroke-width="2.2" stroke-linecap="square"/></svg>
<svg class="a" style="left:1315px;top:160px;" width="9" height="6" viewBox="0 0 9 6"><polygon points="0.5,0.5 8.5,0.5 4.5,5" fill="#000"/></svg>
<svg class="a" style="left:1307px;top:136px;" width="12" height="8" viewBox="0 0 12 8"><polyline points="1.5,6.5 6,2 10.5,6.5" fill="none" stroke="#555" stroke-width="1.8"/></svg>
<div class="a t" style="left:1187.62px;top:9.30px;font-size:13px;line-height:13px;color:#222;font-weight:bold;">?</div>
<svg class="a" style="left:1214px;top:9px;" width="16" height="13" viewBox="0 0 16 13"><rect x="1.5" y="1.5" width="11" height="10" fill="none" stroke="#222" stroke-width="1.3"/><rect x="1.5" y="1.5" width="11" height="2" fill="#222"/><path d="M7,10 V5 M4.8,7.2 L7,5 L9.2,7.2" fill="none" stroke="#222" stroke-width="1"/></svg>
<div class="a" style="left:1248px;top:14px;width:9px;height:2px;background:#222;"></div>
<svg class="a" style="left:1274px;top:9px;" width="16" height="13" viewBox="0 0 16 13"><rect x="1.5" y="1.5" width="11" height="10" fill="none" stroke="#222" stroke-width="1.3"/><rect x="1.5" y="1.5" width="11" height="2.2" fill="#222"/></svg>
<svg class="a" style="left:1309px;top:10px;" width="10" height="10" viewBox="0 0 10 10"><path d="M1.6,1.6 L8,8 M8,1.6 L1.6,8" stroke="#222" stroke-width="2"/></svg>
<div class="a t" style="left:1261.93px;top:36.41px;font-size:17px;line-height:17px;color:#000;font-weight:bold;font-family:'Liberation Serif',serif;">i</div>
<svg class="a" style="left:1277px;top:35px;" width="18" height="15" viewBox="0 0 18 15"><path d="M9,1 L17,8 H14.5 V14 H10.5 V10 H7.5 V14 H3.5 V8 H1 Z" fill="#111"/><rect x="12.5" y="2" width="2" height="4" fill="#111"/></svg>
<svg class="a" style="left:1300px;top:36px;" width="16" height="16" viewBox="0 0 16 16"><rect x="1" y="1" width="14" height="14" fill="#fff" stroke="#111" stroke-width="1.4"/><rect x="1" y="1" width="14" height="3" fill="#111"/><path d="M4.5,4 V15 M8,4 V15 M11.5,4 V15 M1,7.5 H15 M1,11 H15" stroke="#111" stroke-width="1"/></svg>
<svg class="a" style="left:1320px;top:41px;" width="7" height="4" viewBox="0 0 7 4"><polygon points="0,0 6,0 3,3.5" fill="#333"/></svg>
<svg class="a" style="left:3px;top:6px;" width="17" height="18" viewBox="0 0 17 18"><path d="M7.4,1.4 L9.3,6 L14.8,6.6 L13,10 L9.8,12.3 L12.3,14.5 Q12.5,17 10,16.5 L7,12.3 L3.8,10.8 L1.2,7 L5.6,6.3 Z" fill="#f26522" stroke="#f47a30" stroke-width="0.6" stroke-linejoin="round"/></svg>
<div class="a" style="left:25px;top:12px;width:5px;height:1px;background:#000;"></div>
<svg class="a" style="left:24px;top:14px;" width="7" height="5" viewBox="0 0 7 5"><polygon points="0.5,0.5 6.5,0.5 3.5,4" fill="#000"/></svg>
<svg class="a" style="left:25px;top:915px;" width="19" height="14" viewBox="0 0 19 14"><path d="M1,11.5 Q4,5 12,5 L12,1.8 L17.2,7 L12,12 L12,8.8 Q5,8.8 1,11.5 Z" fill="#23b33a"/></svg>
<svg class="a" style="left:178px;top:913px;" width="18" height="18" viewBox="0 0 18 18"><path d="M4.6,7 A6.6,6.6 0 1 1 5.2,14.5" fill="none" stroke="#e8141c" stroke-width="2.6"/><polygon points="1.5,2 8,7.5 1.5,8" fill="#e8141c"/></svg>
<svg class="a" style="left:330px;top:914px;" width="18" height="17" viewBox="0 0 18 17"><path d="M4.5,1.5 H12.5 L14.5,3.5 V7.5 H4.5 Z" fill="#fff" stroke="#111" stroke-width="1.6"/><rect x="1" y="7" width="16" height="6.5" rx="1.2" fill="#111"/><rect x="4.5" y="11.5" width="9.5" height="4.5" fill="#fff" stroke="#111" stroke-width="1.5"/></svg>
<svg class="a" style="left:498px;top:916px;" width="19" height="12" viewBox="0 0 19 12"><ellipse cx="9" cy="5.5" rx="7.2" ry="4.4" fill="none" stroke="#14589c" stroke-width="2"/><circle cx="9" cy="5" r="3.6" fill="#14589c"/></svg>
<svg class="a" style="left:650px;top:913px;" width="18" height="18" viewBox="0 0 18 18"><circle cx="7" cy="7.5" r="4.8" fill="none" stroke="#b5121b" stroke-width="2.2"/><line x1="10.5" y1="11" x2="15" y2="15.5" stroke="#b5121b" stroke-width="2.6"/></svg>
<svg class="a" style="left:1176px;top:913px;" width="19" height="18" viewBox="0 0 19 18"><path d="M2.5,2.5 L15.5,15.5 M15.5,2.5 L2.5,15.5" stroke="#e8141c" stroke-width="4" stroke-linecap="round"/></svg>
<svg class="a" style="left:25px;top:62px;" width="31" height="28" viewBox="0 0 31 28"><rect x="0" y="0" width="30" height="27.5" rx="2.5" fill="#dca244"/><path d="M10.4,0 H18 V14.3 L14.2,11.3 L10.4,14.3 Z" fill="#8b5208"/><rect x="3" y="20" width="13" height="5.6" fill="#fff"/><path d="M4.5,21 V25 M6.5,21 V25 M8.5,21 V25 M10.5,21 V25 M12.5,21 V25 M14.5,21 V25" stroke="#222" stroke-width="1"/></svg>
<svg class="a" style="left:84px;top:62px;" width="32" height="31" viewBox="0 0 32 31"><rect x="0" y="0" width="27" height="24.5" rx="2" fill="#dca244"/><path d="M9.5,0 H17 V12 L13.2,9.5 L9.5,12 Z" fill="#8b5208"/><rect x="2" y="18" width="12" height="5" fill="#f4f4f4"/><path d="M3.5,19 V22 M5.5,19 V22 M7.5,19 V22 M9.5,19 V22 M11.5,19 V22" stroke="#333" stroke-width="1"/><rect x="14" y="12.3" width="16" height="16.5" rx="2.5" fill="#fff" stroke="#333" stroke-width="2"/><path d="M17.5,16 H27.5 M20,19.5 H27.5 M20,22.5 H27.5 M20,25.5 H27.5" stroke="#3a3a4a" stroke-width="1.6"/><path d="M17,19.5 H18.5 M17,22.5 H18.5 M17,25.5 H18.5" stroke="#3a3a4a" stroke-width="1.6"/></svg>
<svg class="a" style="left:137px;top:63px;" width="34" height="28" viewBox="0 0 34 28"><polyline points="1.5,8.5 17,1.6 32.5,8.5" fill="none" stroke="#777777" stroke-width="2.6" stroke-linejoin="round"/><rect x="0.5" y="7.8" width="33" height="2.8" fill="#777777"/><rect x="2" y="10" width="3" height="16.5" fill="#777777"/><rect x="29" y="10" width="3" height="16.5" fill="#777777"/><rect x="7.3" y="18.2" width="19.2" height="8.3" rx="1" fill="#a86d0a"/><rect x="11.5" y="11" width="11.3" height="7.6" rx="1" fill="#a86d0a"/><path d="M15.5,12.5 V15.3 H18.8 V12.5 M9.8,20 V22.5 H13 V20 M20.8,20 V22.5 H24 V20" fill="none" stroke="#fff" stroke-width="1"/></svg>
<svg class="a" style="left:193px;top:59px;" width="32" height="32" viewBox="0 0 32 32"><path d="M17,29.5 H2.5 V6 H24 V17" fill="none" stroke="#777777" stroke-width="2.6"/><rect x="7" y="4.5" width="12.5" height="4.5" fill="#777777"/><circle cx="13.2" cy="3" r="2" fill="none" stroke="#777777" stroke-width="1.6"/><circle cx="9.5" cy="14.5" r="1.1" fill="none" stroke="#777777" stroke-width="1"/><circle cx="9.5" cy="19" r="1.1" fill="none" stroke="#777777" stroke-width="1"/><circle cx="9.5" cy="23.5" r="1.1" fill="none" stroke="#777777" stroke-width="1"/><circle cx="22" cy="25" r="7.2" fill="#2f5bb7" stroke="#fff" stroke-width="1"/><path d="M18.5,25 L21,27.8 L25.5,21.5" fill="none" stroke="#fff" stroke-width="1.8"/></svg>
<svg class="a" style="left:243px;top:61px;" width="34" height="28" viewBox="0 0 34 28"><polyline points="1.5,8.5 17,1.6 32.5,8.5" fill="none" stroke="#777777" stroke-width="2.6" stroke-linejoin="round"/><rect x="0.5" y="7.8" width="33" height="2.8" fill="#777777"/><rect x="2" y="10" width="3" height="16.5" fill="#777777"/><rect x="29" y="10" width="3" height="16.5" fill="#777777"/><rect x="11" y="11" width="11" height="7.5" rx="1" fill="#a86d0a"/><rect x="7" y="18" width="10" height="8.5" rx="1" fill="#a86d0a"/><path d="M14,12.5 V15 H18 V12.5 M9,19.5 V22 H12 V19.5" fill="none" stroke="#fff" stroke-width="0.9"/><path d="M17.5,17 H27 V14 L32,19.3 L27,24.5 V21.5 H17.5 Z" fill="#333" stroke="#fff" stroke-width="0.6"/><path d="M26,23 H19 V20.2 L13.5,25.5 L19,30 V27 H26 Z" fill="#333" stroke="#fff" stroke-width="0.6"/></svg>
<svg class="a" style="left:303px;top:60px;" width="32" height="32" viewBox="0 0 32 32"><circle cx="16" cy="16" r="14.8" fill="#7cc242"/><line x1="14" y1="9.6" x2="20.5" y2="13.8" stroke="#fff" stroke-width="3.6" stroke-linecap="round"/><polygon points="22.5,9.5 26.8,16.8 18.5,17.5" fill="#fff"/><line x1="18.3" y1="22.3" x2="12" y2="18.3" stroke="#fff" stroke-width="3.6" stroke-linecap="round"/><polygon points="5.2,15 14,14.6 9.4,22.8" fill="#fff"/></svg>
<svg class="a" style="left:370px;top:61px;" width="34" height="30" viewBox="0 0 34 30"><path d="M5.5,13.4 L7.8,5.5 L19,1.4 L19,12.3 Z" fill="#a86d0a"/><path d="M19,1.4 L30.3,5.9 L32.6,13.4 L20.5,11 Z" fill="#a86d0a"/><path d="M19,12.8 L30.5,16.2 L30.5,25.5 L19,27.5 Z" fill="#a86d0a"/><path d="M6,25 L19,27.5 L19,28.3 L6,25.8 Z" fill="#a86d0a"/><path d="M6,15.4 H12.3 V13.6 L17.3,17.5 L12.3,21.4 V19.7 H6 Z" fill="#333"/><path d="M11.5,21.3 H6 V19.4 L1,23.2 L6,27 V25.3 H11.5 Z" fill="#333"/></svg>
<svg class="a" style="left:428px;top:61px;" width="34" height="30" viewBox="0 0 34 30"><path d="M5.5,13.4 L7.8,5.5 L19,1.4 L19,12.3 Z" fill="#a86d0a"/><path d="M19,1.4 L30.3,5.9 L32.6,13.4 L20.5,11 Z" fill="#a86d0a"/><path d="M19,12.8 L30.5,16.2 L30.5,25.5 L19,27.5 Z" fill="#a86d0a"/><path d="M6,25 L19,27.5 L19,28.3 L6,25.8 Z" fill="#a86d0a"/><path d="M3.2,17.9 H10 V16.2 L15.3,20.2 L10,24.3 V22.3 H3.2 Z" fill="#333"/></svg>
<svg class="a" style="left:486px;top:61px;" width="34" height="30" viewBox="0 0 34 30"><path d="M5.5,13.4 L7.8,5.5 L19,1.4 L19,12.3 Z" fill="#a86d0a"/><path d="M19,1.4 L30.3,5.9 L32.6,13.4 L20.5,11 Z" fill="#a86d0a"/><path d="M19,12.8 L30.5,16.2 L30.5,25.5 L19,27.5 Z" fill="#a86d0a"/><path d="M6,25 L19,27.5 L19,28.3 L6,25.8 Z" fill="#a86d0a"/><path d="M12.8,17.8 H6.5 V16 L1.1,20 L6.5,24 V22.2 H12.8 Z" fill="#333"/></svg>
<svg class="a" style="left:543px;top:63px;" width="34" height="28" viewBox="0 0 34 28"><polyline points="1.5,8.5 17,1.6 32.5,8.5" fill="none" stroke="#777777" stroke-width="2.6" stroke-linejoin="round"/><rect x="0.5" y="7.8" width="33" height="2.8" fill="#777777"/><rect x="2" y="10" width="3" height="16.5" fill="#777777"/><rect x="29" y="10" width="3" height="16.5" fill="#777777"/><polygon points="24.80,19.00 22.17,21.14 22.52,24.52 19.14,24.17 17.00,26.80 14.86,24.17 11.48,24.52 11.83,21.14 9.20,19.00 11.83,16.86 11.48,13.48 14.86,13.83 17.00,11.20 19.14,13.83 22.52,13.48 22.17,16.86" fill="#f5a000" stroke="#f5a000" stroke-width="1.5" stroke-linejoin="round"/><circle cx="17" cy="19" r="3" fill="#fff"/></svg>
<svg class="a" style="left:606px;top:64px;" width="34" height="25" viewBox="0 0 34 25"><path fill-rule="evenodd" d="M4.6,1 H11.9 L19.2,16.3 V20.4 H1.1 V10.4 H4.2 Z M6.8,3.9 H10.7 L15.4,13 H6.8 Z" fill="#f7a000" stroke="#f7a000" stroke-width="0.6" stroke-linejoin="round"/><circle cx="4" cy="20.7" r="2.1" fill="#fff" stroke="#666" stroke-width="1.3"/><circle cx="18.1" cy="20.7" r="2.1" fill="#fff" stroke="#666" stroke-width="1.3"/><rect x="20.2" y="3" width="1.2" height="15" fill="#777"/><rect x="22.5" y="19.2" width="6.5" height="1.3" fill="#888"/><rect x="22.5" y="3.9" width="9.4" height="14.1" rx="1" fill="#222"/><path d="M22.5,3.9 L31.9,11 M31.9,3.9 L22.5,11 M22.5,11 L31.9,18 M31.9,11 L22.5,18 M22.5,11 H31.9" stroke="#fff" stroke-width="1"/></svg>
<svg class="a" style="left:659px;top:60px;" width="32" height="32" viewBox="0 0 32 32"><rect x="2.6" y="2.4" width="26.8" height="26.8" rx="4.5" fill="#fff" stroke="#666" stroke-width="2.9"/><path d="M7.1,14.5 L15.8,7.1 V11 Q24,12 25.3,20 Q25.3,23 24.2,24.5 Q22,17.8 15.8,17.4 V21.8 Z" fill="#a00000"/></svg>
<svg class="a" style="left:704px;top:65px;" width="34" height="23" viewBox="0 0 34 23"><rect x="0.5" y="10.5" width="2.2" height="11" fill="#1e8a1e"/><path d="M4,10 L8,6 L10.5,0.8 Q12,0.5 12,3 L11,9 H15.5 Q17,9.5 16.5,11.5 Q17.5,13 16.3,14.5 Q17,16 15.8,17.5 Q16,19.5 14.5,20.5 H4 Z" fill="#1e8a1e"/><path d="M12,12 H16 M12,14.8 H16 M12,17.5 H15.5" stroke="#c8e6c8" stroke-width="0.8"/><rect x="31" y="1" width="2.2" height="11" fill="#e01010"/><path d="M29.5,12 L25.5,16 L23,21.5 Q21.5,21.8 21.5,19 L22.5,13 H18 Q16.5,12.5 17,10.5 Q16,9 17.2,7.5 Q16.5,6 17.7,4.5 Q17.5,2.5 19,1.5 H29.5 Z" fill="#e01010"/><path d="M17.5,4.5 H21 M17.5,7.3 H21 M17.5,10 H21" stroke="#f8c0c0" stroke-width="0.8"/></svg>
</body></html>
